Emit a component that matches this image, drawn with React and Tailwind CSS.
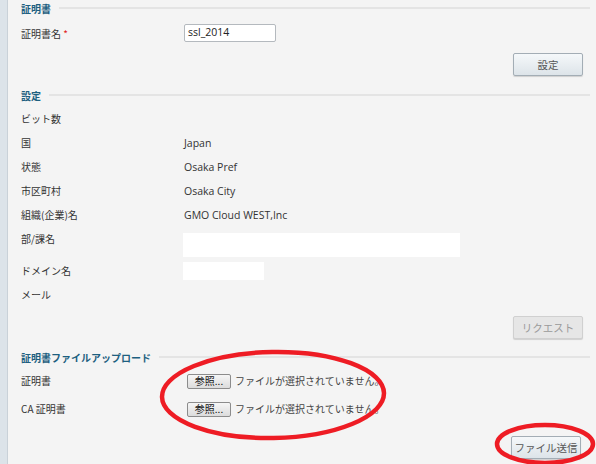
import React from 'react';

const jp = { fontFamily: '"Noto Sans CJK JP", "Noto Sans", sans-serif' };
const latin = { fontFamily: '"Open Sans", "Noto Sans CJK JP", sans-serif' };

const Heading = ({ children, className = '' }) => (
    <div className={`flex items-start ${className}`}>
        <span className="text-[10px] font-bold text-[#1d5f80] leading-[16px] pr-2">{children}</span>
        <div className="flex-1 mt-[6px] border-t-2 border-[#e4e4e4]" />
    </div>
);

const Row = ({ label, children, h = 'h-[24px]' }) => (
    <div className={`grid grid-cols-[163px_1fr] ${h} items-center`}>
        <div className="text-[10px] text-[#333] leading-[14px]">{label}</div>
        <div className="text-[10.5px] text-[#333] leading-[14px]" style={latin}>{children}</div>
    </div>
);

const Button = ({ children, disabled = false, className = '' }) => (
    <button
        className={`w-[70px] h-[23px] rounded-[2px] border text-[10.5px] shadow-[0_1px_1px_rgba(0,0,0,0.15)] ${disabled
            ? 'border-[#d0d0d0] bg-[#e6e6e6] text-[#9a9a9a]'
            : 'border-[#a3adb5] bg-gradient-to-b from-[#f5f8fa] to-[#dde4e9] text-[#555]'
            } ${className}`}
    >
        {children}
    </button>
);

const FileField = () => (
    <div className="flex items-center gap-[4px] pl-[3px]" style={jp}>
        <span className="w-[44px] h-[15px] flex items-center justify-center rounded-[2px] border border-[#8c8c8c] bg-gradient-to-b from-[#f6f6f6] to-[#dcdcdc] text-[10px] text-[#111] leading-none">
            参照...
        </span>
        <span className="text-[10px] text-[#444]">ファイルが選択されていません。</span>
    </div>
);

const App = () => {
    return (
        <div className="relative w-[596px] h-[464px] bg-[#f4f4f4] flex overflow-hidden" style={jp}>
            <div className="w-[8px] shrink-0 bg-[#dce3e9] border-r border-[#c9d1d8]" />

            <div className="flex-1 pl-[13px] pr-[6px] pt-[1px]">
                {/* 証明書 */}
                <Heading>証明書</Heading>
                <div className="mt-[7px]">
                    <div className="grid grid-cols-[163px_1fr] h-[18px] items-center">
                        <div className="text-[10px] text-[#333]">
                            証明書名 <span className="text-[#e02020]">*</span>
                        </div>
                        <div className="w-[92px] h-[18px] bg-white border border-[#b4b9be] rounded-[2px] px-[3px] flex items-center text-[10.5px] text-[#222]" style={latin}>
                            ssl_2014
                        </div>
                    </div>
                </div>
                <div className="flex justify-end pr-[7px] mt-[11px]">
                    <Button>設定</Button>
                </div>

                {/* 設定 */}
                <Heading className="mt-[12px]">設定</Heading>
                <div className="mt-[3px]">
                    <Row label="ビット数" />
                    <Row label="国">Japan</Row>
                    <Row label="状態">Osaka Pref</Row>
                    <Row label="市区町村">Osaka City</Row>
                    <Row label="組織(企業)名">GMO Cloud WEST,Inc</Row>
                    <div className="grid grid-cols-[163px_1fr] h-[32px] items-start">
                        <div className="text-[10px] text-[#333] leading-[14px] mt-[5px]">部/課名</div>
                        <div className="w-[277px] h-[24px] bg-white -ml-[1px] mt-[6px]" />
                    </div>
                    <div className="grid grid-cols-[163px_1fr] h-[24px] items-center">
                        <div className="text-[10px] text-[#333] leading-[14px]">ドメイン名</div>
                        <div className="w-[81px] h-[18px] bg-white -ml-[1px]" />
                    </div>
                    <Row label="メール" />
                </div>
                <div className="flex justify-end pr-[7px] mt-[9px]">
                    <Button disabled>リクエスト</Button>
                </div>

                {/* 証明書ファイルアップロード */}
                <Heading className="mt-[11px]">証明書ファイルアップロード</Heading>
                <div className="mt-[2px]">
                    <Row label="証明書" h="h-[26px]">
                        <FileField />
                    </Row>
                    <Row label="CA 証明書" h="h-[30px]">
                        <FileField />
                    </Row>
                </div>
                <div className="flex justify-end pr-[9px] mt-[12px]">
                    <Button className="w-[68px]">ファイル送信</Button>
                </div>
            </div>

            {/* 手書きの赤丸 */}
            <svg className="absolute inset-0 pointer-events-none" width="596" height="464" viewBox="0 0 596 464">
                <ellipse cx="273" cy="395" rx="111" ry="43" fill="none" stroke="#ee1c24" strokeWidth="4.5" transform="rotate(-1 273 395)" />
                <ellipse cx="545" cy="444" rx="48" ry="19" fill="none" stroke="#ee1c24" strokeWidth="4.5" />
            </svg>
        </div>
    );
};

export default App;
